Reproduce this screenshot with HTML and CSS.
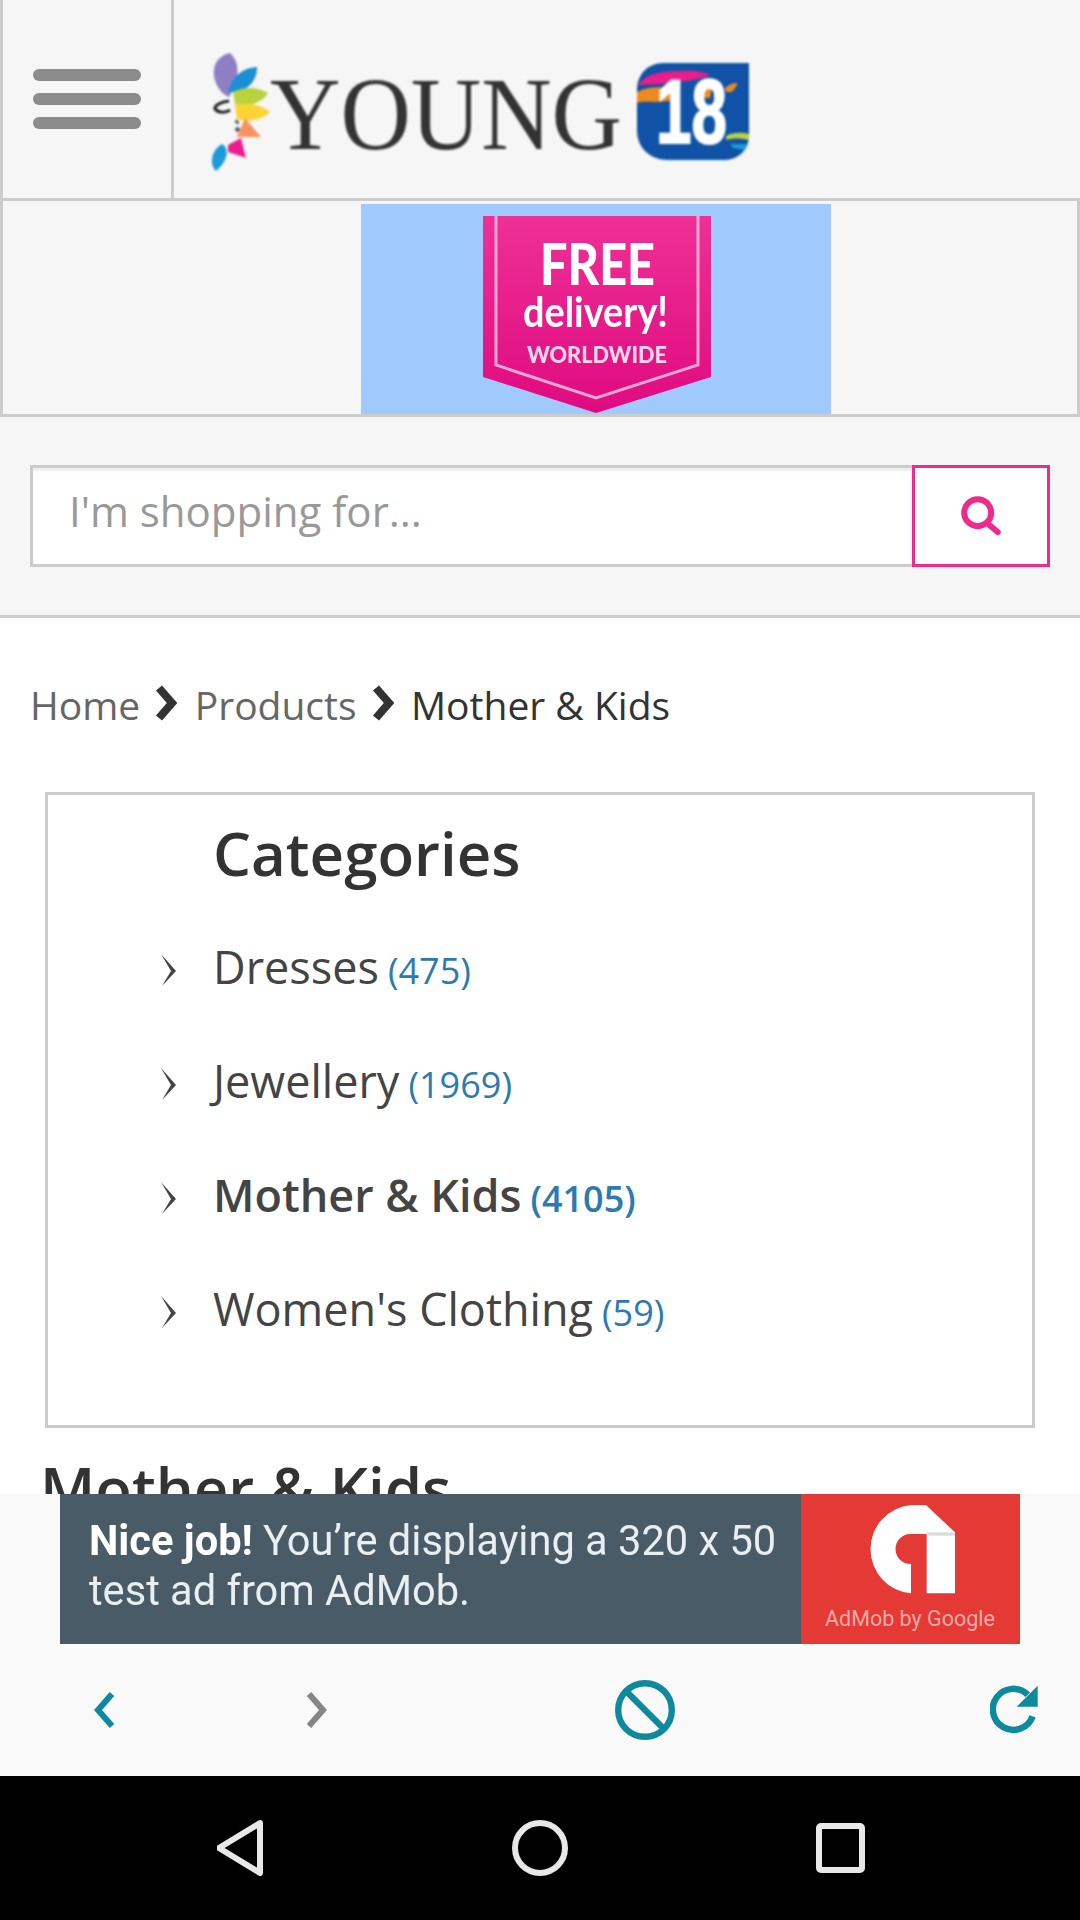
FILE: index.html
```html
<!DOCTYPE html>
<html lang="en">
<head>
<meta charset="utf-8">
<title>Young18</title>
<link rel="stylesheet" href="styles.css">
</head>
<body>
<div class="page">
  <header class="top">
    <div class="menu"><span class="bar"></span><span class="bar"></span><span class="bar"></span></div>
    <svg class="logo" viewBox="205 45 555 130" width="555" height="130">
      <path fill="#8e7fc4" d="M230 53C242 64 238 82 229 97C217 92 211 76 215 65C218 58 224 54 230 53Z"/>
      <path fill="#1b8fd6" d="M228 92C232 76 242 68 257 67C257 82 247 90 236 92Z"/>
      <path fill="#b9d23e" d="M233 92C245 86 258 87 268 93C262 104 245 107 235 104Z"/>
      <path fill="#fbd433" d="M235 105C248 102 262 105 270 112C261 121 245 122 237 119Z"/>
      <path fill="#f7935c" d="M245 118L261 137L237 137Z"/>
      <path fill="#ea1e90" d="M228 145L241 138L246 158L228 152Z"/>
      <path fill="#1b9bd8" d="M222 144C229 148 229 160 216 171C209 165 211 150 222 144Z"/>
      <path fill="none" stroke="#222" stroke-width="3" d="M229 101C220 102 214 106 215 109C218 113 226 113 230 110"/>
      <path fill="none" stroke="#555" stroke-width="4" d="M236 123L238 121M236 131L239 128"/>
      <text class="logo-word" x="270" y="149" textLength="352" lengthAdjust="spacingAndGlyphs">YOUNG</text>
      <path fill="#0f52a6" d="M664 63H749V135C749 150 738 160 724 160H668C650 160 637 148 637 130V90C637 74 648 63 664 63Z"/>
      <path fill="#ea1e8c" d="M638 85C645 74 660 71 680 71C695 70 705 72 710 75C700 80 680 82 660 84Z"/>
      <path fill="#f08a1e" d="M637 92C648 86 660 87 672 88V100C655 104 645 100 637 103Z"/>
      <path fill="#f08a1e" d="M696 88H712L710 98H696Z"/>
      <path fill="#f08a1e" d="M725 88C730 84 735 82 738 84L732 92L726 92Z"/>
      <path fill="#b9d23e" d="M726 136C733 132 742 132 749 134V140C740 138 733 138 726 140Z"/>
      <path fill="#1b9bd8" d="M730 144H748L745 150L733 148Z"/>
      <text class="logo-num" x="656" y="143" textLength="71" lengthAdjust="spacingAndGlyphs">18</text>
    </svg>
  </header>

  <section class="promo">
    <svg class="promo-art" viewBox="361 204 470 210" width="470" height="210">
      <defs>
        <linearGradient id="ribbon" x1="0" y1="0" x2="0" y2="1">
          <stop offset="0" stop-color="#ee3097"/>
          <stop offset="1" stop-color="#e00a80"/>
        </linearGradient>
      </defs>
      <rect x="361" y="204" width="470" height="210" fill="#a0c9fe"/>
      <path fill="url(#ribbon)" d="M483 216H711V377L596 413L483 377Z"/>
      <path fill="none" stroke="#f9a8d4" stroke-width="3" d="M496 216V365L596 398L698 365V216"/>
      <text class="free" x="540" y="285" textLength="115" lengthAdjust="spacingAndGlyphs">FREE</text>
      <text class="delivery" x="523" y="327" textLength="145" lengthAdjust="spacingAndGlyphs">delivery!</text>
      <text class="world" x="527" y="363" textLength="140" lengthAdjust="spacingAndGlyphs">WORLDWIDE</text>
    </svg>
  </section>

  <section class="search">
    <input class="search-input" type="text" placeholder="I'm shopping for...">
    <div class="search-btn">
      <svg viewBox="0 0 44 44" width="44" height="44"><circle cx="18.7" cy="18.7" r="13.5" fill="none" stroke="#ee2a8c" stroke-width="6"/><path d="M28.3 29.3L38.7 38" fill="none" stroke="#ee2a8c" stroke-width="6" stroke-linecap="round"/></svg>
    </div>
  </section>

  <main class="content">
    <nav class="crumbs">
      <span class="crumb">Home</span>
      <svg class="crumb-sep" viewBox="0 0 24 36" width="24" height="36"><path d="M5 3L18 18L5 33" fill="none" stroke="#333" stroke-width="8"/></svg>
      <span class="crumb">Products</span>
      <svg class="crumb-sep" viewBox="0 0 24 36" width="24" height="36"><path d="M5 3L18 18L5 33" fill="none" stroke="#333" stroke-width="8"/></svg>
      <span class="crumb current">Mother &amp; Kids</span>
    </nav>

    <section class="cats">
      <h2 class="cats-title">Categories</h2>
      <ul class="cat-list">
        <li class="cat"><svg class="cat-arrow" viewBox="0 0 18 32" width="18" height="32"><path d="M1 0L16 17L2 32L11 17Z" fill="#444"/></svg><span class="cat-name">Dresses</span><span class="cat-count">(475)</span></li>
        <li class="cat"><svg class="cat-arrow" viewBox="0 0 18 32" width="18" height="32"><path d="M1 0L16 17L2 32L11 17Z" fill="#444"/></svg><span class="cat-name">Jewellery</span><span class="cat-count">(1969)</span></li>
        <li class="cat active"><svg class="cat-arrow" viewBox="0 0 18 32" width="18" height="32"><path d="M1 0L16 17L2 32L11 17Z" fill="#444"/></svg><span class="cat-name">Mother &amp; Kids</span><span class="cat-count">(4105)</span></li>
        <li class="cat"><svg class="cat-arrow" viewBox="0 0 18 32" width="18" height="32"><path d="M1 0L16 17L2 32L11 17Z" fill="#444"/></svg><span class="cat-name">Women's Clothing</span><span class="cat-count">(59)</span></li>
      </ul>
    </section>

    <h1 class="page-title">Mother &amp; Kids</h1>
  </main>

  <aside class="ad-wrap">
    <div class="ad">
      <div class="ad-text"><b>Nice job!</b> You’re displaying a 320 x 50 test ad from AdMob.</div>
      <svg class="ad-logo" viewBox="3 0 657 450" width="219" height="150">
        <rect x="3" width="657" height="450" fill="#e53935"/>
        <path fill="#fff" d="M333 298A133 133 0 0 1 333 33L378 33L465 115V298H380V120H330A45 45 0 0 0 333 210Z"/>
        <rect x="380" y="115" width="85" height="10" fill="#d8dcde"/>
        <text class="ad-brand" x="75" y="395" textLength="510" lengthAdjust="spacingAndGlyphs">AdMob by Google</text>
      </svg>
    </div>
  </aside>

  <div class="toolbar">
    <svg class="tb-back" viewBox="0 0 22 36" width="22" height="36"><path d="M19 2L5 18L19 34" fill="none" stroke="#0e8a9e" stroke-width="6"/></svg>
    <svg class="tb-fwd" viewBox="0 0 22 36" width="22" height="36"><path d="M3 2L17 18L3 34" fill="none" stroke="#868686" stroke-width="6"/></svg>
    <svg class="tb-stop" viewBox="0 0 60 60" width="60" height="60"><circle cx="30" cy="30" r="26.8" fill="none" stroke="#0e8a9e" stroke-width="6.4"/><path d="M11 11L49 49" stroke="#0e8a9e" stroke-width="6.4"/></svg>
    <svg class="tb-reload" viewBox="0 0 48 50" width="48" height="50"><path d="M37.8 9.8A20.5 20.5 0 1 0 42.6 31.3" fill="none" stroke="#0e8a9e" stroke-width="6.5"/><path d="M47.7 .7V21.7H26.7Z" fill="#0e8a9e"/></svg>
  </div>

  <div class="sysnav">
    <svg class="nav-back" viewBox="0 0 46 56" width="46" height="56"><path d="M43 3L2 28L43 53Z" fill="none" stroke="#e8e8e8" stroke-width="6" stroke-linejoin="round"/></svg>
    <svg class="nav-home" viewBox="0 0 56 56" width="56" height="56"><circle cx="28" cy="28" r="25" fill="none" stroke="#e8e8e8" stroke-width="6"/></svg>
    <svg class="nav-recent" viewBox="0 0 50 50" width="50" height="50"><rect x="3" y="3" width="43" height="44" rx="2" fill="none" stroke="#e8e8e8" stroke-width="6"/></svg>
  </div>
</div>
</body>
</html>
```

FILE: styles.css
```css
* { box-sizing: border-box; }
html, body { margin: 0; padding: 0; background: #fff; }
body { font-family: "Open Sans", "Liberation Sans", sans-serif; color: #333; }
.page { width: 1080px; height: 1920px; display: flex; flex-direction: column; overflow: hidden; }

.top { height: 198px; flex: none; display: flex; align-items: flex-start; background: #f6f6f6; border-left: 3px solid #ccc; }
.menu { width: 171px; height: 198px; flex: none; border-right: 3px solid #ccc; padding: 69px 0 0 30px; display: flex; flex-direction: column; gap: 12px; }
.bar { display: block; width: 108px; height: 12px; border-radius: 6px; background: #8c8c8c; }
.logo { display: block; margin: 45px 0 0 31px; filter: blur(.8px); }
.logo-word { font-family: "Liberation Serif", serif; font-size: 104px; fill: #333; }
.logo-num { font-family: "Liberation Sans", sans-serif; font-weight: 700; font-size: 90px; fill: #fff; stroke: #fff; stroke-width: 2px; }

.promo { height: 219px; flex: none; background: #f6f6f6; border: 3px solid #ccc; padding: 3px 0 0 358px; }
.promo-art { display: block; filter: blur(.5px); }
.free { font-family: Lato, sans-serif; font-weight: 900; font-size: 58px; fill: #fff; }
.delivery { font-family: Lato, sans-serif; font-weight: 700; font-size: 42px; fill: #fff; }
.world { font-family: Lato, sans-serif; font-weight: 900; font-size: 23px; fill: #fbd5e8; }

.search { height: 201px; flex: none; background: #f6f6f6; border-bottom: 3px solid #ccc; padding: 48px 30px 0 30px; display: flex; align-items: flex-start; }
.search-input { flex: 1; min-width: 0; height: 102px; border: 3px solid #ccc; border-right: 0; background: #fff; padding: 0 0 12px 36px; font-family: "Open Sans", sans-serif; font-size: 42px; color: #333; box-shadow: inset 0 3px 3px rgba(0,0,0,.07); outline: 0; border-radius: 0; }
.search-input::placeholder { color: #999; opacity: 1; }
.search-btn { width: 138px; height: 102px; flex: none; border: 3px solid #ee2a8c; background: #fff; display: flex; align-items: center; justify-content: center; }

.content { flex: 1; min-height: 0; overflow: hidden; background: #fff; }
.crumbs { display: flex; align-items: center; height: 54px; margin: 59px 0 0 30px; gap: 14px; font-size: 39px; }
.crumb { color: #666; }
.crumb.current { color: #333; }
.crumb-sep { flex: none; margin-right: 2.5px; margin-top: -2px; }

.cats { width: 990px; height: 636px; margin: 61px 0 0 45px; border: 3px solid #ccc; padding: 20px 0 0 165px; }
.cats-title { margin: 0; font-size: 60px; line-height: 76px; font-weight: 600; color: #333; }
.cat-list { list-style: none; margin: 19px 0 0; padding: 0; }
.cat { position: relative; height: 114px; display: flex; align-items: baseline; font-size: 45px; line-height: 114px; color: #444; }
.cat-arrow { position: absolute; left: -53px; top: 44px; }
.cat-count { margin-left: 9px; font-size: 36px; color: #2c7ab0; }
.cat.active { font-weight: 600; }

.page-title { margin: 22px 0 0 40px; font-size: 60px; line-height: 76px; font-weight: 600; color: #333; }

.ad-wrap { height: 150px; flex: none; background: #f9f9f9; padding: 0 60px; }
.ad { display: flex; height: 150px; background: #485b67; }
.ad-text { flex: 1; padding: 22px 10px 0 29px; font-family: Roboto, sans-serif; font-size: 41.6px; line-height: 50px; color: #e9eef0; filter: blur(.4px); }
.ad-text b { font-weight: 700; color: #fff; }
.ad-logo { display: block; flex: none; }
.ad-brand { font-family: Roboto, sans-serif; font-size: 66px; fill: #f7aaa6; }

.toolbar { height: 132px; flex: none; background: #f9f9f9; display: flex; align-items: center; padding-left: 93px; }
.toolbar svg { display: block; flex: none; }
.tb-fwd { margin-left: 191px; }
.tb-stop { margin-left: 287px; }
.tb-reload { margin-left: 315px; margin-top: -1px; }

.sysnav { height: 144px; flex: none; background: #000; display: flex; align-items: center; padding-left: 217px; }
.sysnav svg { display: block; flex: none; }
.nav-home { margin-left: 249px; }
.nav-recent { margin-left: 248px; }
```
